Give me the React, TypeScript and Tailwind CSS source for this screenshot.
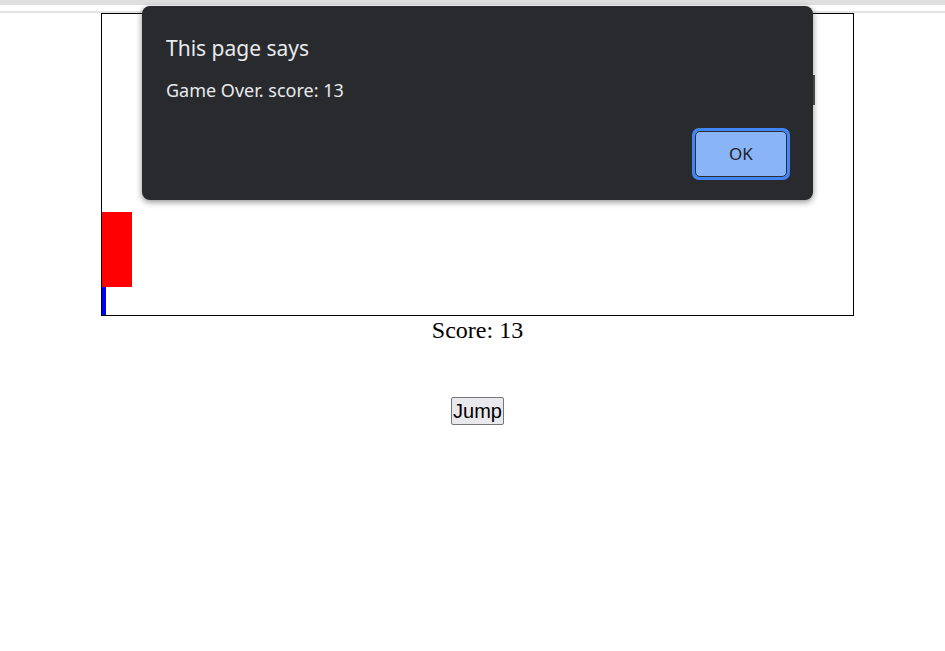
import React from "react";

export default function App() {
  return (
    <div className="relative h-[651px] w-full overflow-hidden bg-white">
      {/* browser strip */}
      <div className="h-[5px] bg-[#dfdfdf]" />
      <div className="h-[6px] bg-white" />
      <div className="h-[2px] bg-[#e3e3e3]" />

      {/* game */}
      <div className="ml-[101px] w-[753px]">
        <div className="relative h-[303px] w-[753px] border border-black">
          <div className="absolute bottom-0 left-0 h-[30px] w-[4px] bg-[#0000ff]" />
          <div className="absolute left-0 top-[198px] h-[75px] w-[30px] bg-[#ff0000]" />
        </div>
        <div
          className="text-center text-[24px] leading-[28px] text-black"
          style={{ fontFamily: '"Liberation Serif", serif' }}
        >
          Score: 13
        </div>
        <div className="mt-[53px] flex justify-center">
          <button
            className="h-[28px] rounded-[2px] border border-[#767676] bg-[#e9e9ed] px-[1px] text-[20px] leading-[24px] text-black"
            style={{ fontFamily: '"Liberation Sans", Arial, sans-serif' }}
          >
            Jump
          </button>
        </div>
      </div>

      {/* alert dialog */}
      <div className="absolute left-[813px] top-[75px] h-[30px] w-[2px] bg-[#555555]" />
      <div
        className="absolute left-[142px] top-[6px] flex h-[194px] w-[671px] flex-col rounded-[8px] bg-[#292a2d] px-[23px] pt-[28px] shadow-[0_2px_6px_rgba(0,0,0,0.45)]"
        style={{ fontFamily: '"Noto Sans", "Open Sans", sans-serif' }}
      >
        <div className="pl-[1px] text-[21px] leading-[28px] text-[#e8eaed]">This page says</div>
        <div className="mt-[16px] pl-[1px] text-[18px] leading-[24px] text-[#e8eaed]">
          Game Over. score: 13
        </div>
        <div className="mt-[26px] flex justify-end">
          <div className="rounded-[7px] bg-[#4285f4] p-[3px]">
            <button className="flex h-[46px] w-[92px] items-center justify-center rounded-[5px] border border-[#2b2d31] bg-[#8ab4f8] text-[17px] text-[#202124]">
              OK
            </button>
          </div>
        </div>
      </div>
    </div>
  );
}
